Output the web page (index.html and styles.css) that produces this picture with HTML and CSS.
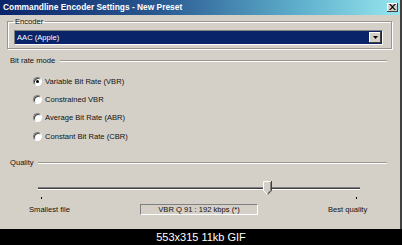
FILE: index.html
```html
<!DOCTYPE html>
<html>
<head>
<meta charset="utf-8">
<link rel="stylesheet" href="styles.css">
</head>
<body>
<div class="window">
  <div class="titlebar">
    <span class="title">Commandline Encoder Settings - New Preset</span>
    <span class="close">
      <svg width="7" height="6" viewBox="0 0 7 6"><path d="M0 0h1.5l2 2 2-2H7L4.2 3 7 6H5.5l-2-2-2 2H0l2.8-3z" fill="#000"/></svg>
    </span>
  </div>
  <fieldset class="group">
    <legend class="legend">Encoder</legend>
    <div class="combo">
      <span class="combo-text">AAC (Apple)</span>
      <span class="combo-btn">
        <svg width="5" height="3" viewBox="0 0 5 3"><path d="M0 0h5L2.5 3z" fill="#000"/></svg>
      </span>
    </div>
  </fieldset>

  <div class="section-head head-bitrate">
    <span class="section-label">Bit rate mode</span>
    <span class="rule rule-bitrate"></span>
  </div>
  <div class="radios">
    <div class="radio-row"><span class="radio checked"></span><span>Variable Bit Rate (VBR)</span></div>
    <div class="radio-row"><span class="radio"></span><span>Constrained VBR</span></div>
    <div class="radio-row"><span class="radio"></span><span>Average Bit Rate (ABR)</span></div>
    <div class="radio-row"><span class="radio"></span><span>Constant Bit Rate (CBR)</span></div>
  </div>

  <div class="section-head head-quality">
    <span class="section-label">Quality</span>
    <span class="rule rule-quality"></span>
  </div>
  <div class="slider">
    <div class="track"></div>
    <svg class="thumb" width="9" height="14" viewBox="0 0 9 14">
      <path d="M0.5 0.5h8v9l-4 4-4-4z" fill="#d4d0c8"/>
      <path d="M0.5 10V0.5H8" fill="none" stroke="#fff"/>
      <path d="M8.5 0v9.7L4.5 13.7" fill="none" stroke="#404040"/>
      <path d="M7.5 1v8.3L4.5 12.3" fill="none" stroke="#808080"/>
      <path d="M0.5 9.5l4 4" fill="none" stroke="#fff"/>
    </svg>
  </div>
  <div class="ticks">
    <span class="tick"></span>
    <span class="tick"></span>
  </div>
  <div class="labels">
    <span class="lbl-small">Smallest file</span>
    <span class="vbr-box">VBR Q 91 : 192 kbps (*)</span>
    <span class="lbl-best">Best quality</span>
  </div>
</div>
<div class="caption">553x315 11kb GIF</div>
</body>
</html>
```
FILE: styles.css
```css
html, body {
  margin: 0;
  padding: 0;
}
body {
  width: 402px;
  height: 245px;
  background: #000;
  overflow: hidden;
  font-family: "Liberation Sans", Arial, sans-serif;
  font-size: 7.6px;
  color: #111;
}
.window {
  width: 400px;
  height: 229px;
  background: #d4d0c8;
  border-right: 2px solid #404040;
  box-sizing: content-box;
  overflow: hidden;
}
.titlebar {
  height: 15px;
  display: flex;
  align-items: center;
  justify-content: space-between;
  background: linear-gradient(to right, #0a246a 0%, #2a5a92 40%, #5fb0cc 75%, #96e6ee 100%);
  padding: 0 2px 0 3px;
}
.title {
  font-weight: bold;
  font-size: 8.4px;
  color: #fff;
  line-height: 15px;
}
.close {
  width: 11px;
  height: 9px;
  background: #d4d0c8;
  box-shadow: inset -1px -1px 0 #404040, inset 1px 1px 0 #fff;
  display: flex;
  align-items: center;
  justify-content: center;
  margin-top: -1px;
}
.group {
  margin: 2px 8px 0 7px;
  padding: 0 8px 3px 6px;
  border: 1px solid #9a968e;
  box-shadow: 1px 1px 0 #fff, inset 1px 1px 0 #fff;
}
.legend {
  margin-left: -1px;
  padding: 0 2px;
  line-height: 9px;
}
.combo {
  margin-top: 4px;
  height: 15px;
  box-sizing: border-box;
  background: #0a246a;
  border-top: 1px solid #808080;
  border-left: 1px solid #808080;
  border-right: 1px solid #fff;
  border-bottom: 1px solid #fff;
  display: flex;
  align-items: center;
  justify-content: space-between;
  padding: 0 1px 0 2px;
}
.combo-text {
  color: #fff;
  line-height: 11px;
}
.combo-btn {
  width: 12px;
  height: 11px;
  background: #d4d0c8;
  box-shadow: inset -1px -1px 0 #404040, inset 1px 1px 0 #fff;
  display: flex;
  align-items: center;
  justify-content: center;
}
.section-head {
  display: flex;
  align-items: center;
  height: 9px;
  padding-left: 10px;
  margin-right: 13px;
}
.head-bitrate {
  margin-top: 7px;
}
.head-quality {
  margin-top: 13px;
}
.section-label {
  line-height: 9px;
  white-space: nowrap;
}
.rule {
  flex: 1;
  height: 0;
  border-top: 1px solid #9a968e;
  border-bottom: 1px solid #fff;
  margin-left: 5px;
}
.rule-quality {
  margin-left: 4px;
}
.radios {
  margin-top: 7px;
  padding-left: 33px;
}
.radio-row {
  height: 18.3px;
  display: flex;
  align-items: center;
  gap: 3px;
}
.radio {
  width: 9px;
  height: 9px;
  box-sizing: border-box;
  border-radius: 50%;
  background: #fff;
  border: 1px solid;
  border-color: #808080 #fff #fff #808080;
  box-shadow: inset 1px 1px 0 #404040;
  display: flex;
  align-items: center;
  justify-content: center;
}
.radio.checked::after {
  content: "";
  width: 3px;
  height: 3px;
  border-radius: 50%;
  background: #000;
}
.slider {
  position: relative;
  margin: 14px 0 0 38px;
  width: 322px;
  height: 14px;
  display: flex;
  align-items: center;
}
.track {
  width: 100%;
  height: 3px;
  box-sizing: border-box;
  border-top: 1px solid #808080;
  background: #404040;
  border-bottom: 1px solid #fff;
}
.thumb {
  position: absolute;
  left: 225px;
  top: 0;
}
.ticks {
  display: flex;
  justify-content: space-between;
  margin-left: 41px;
  width: 316px;
  height: 4px;
  align-items: flex-end;
}
.tick {
  width: 1px;
  height: 2px;
  background: #000;
}
.labels {
  display: flex;
  align-items: center;
  margin-top: 5px;
  padding-left: 29px;
  height: 11px;
}
.lbl-small {
  width: 111px;
  white-space: nowrap;
}
.vbr-box {
  width: 118px;
  height: 11px;
  box-sizing: border-box;
  border-top: 1px solid #808080;
  border-left: 1px solid #808080;
  border-right: 1px solid #fff;
  border-bottom: 1px solid #fff;
  text-align: center;
  line-height: 9px;
  white-space: nowrap;
}
.lbl-best {
  margin-left: 70px;
  white-space: nowrap;
}
.caption {
  height: 16px;
  line-height: 16px;
  text-align: center;
  color: #fff;
  font-size: 11px;
}
```
